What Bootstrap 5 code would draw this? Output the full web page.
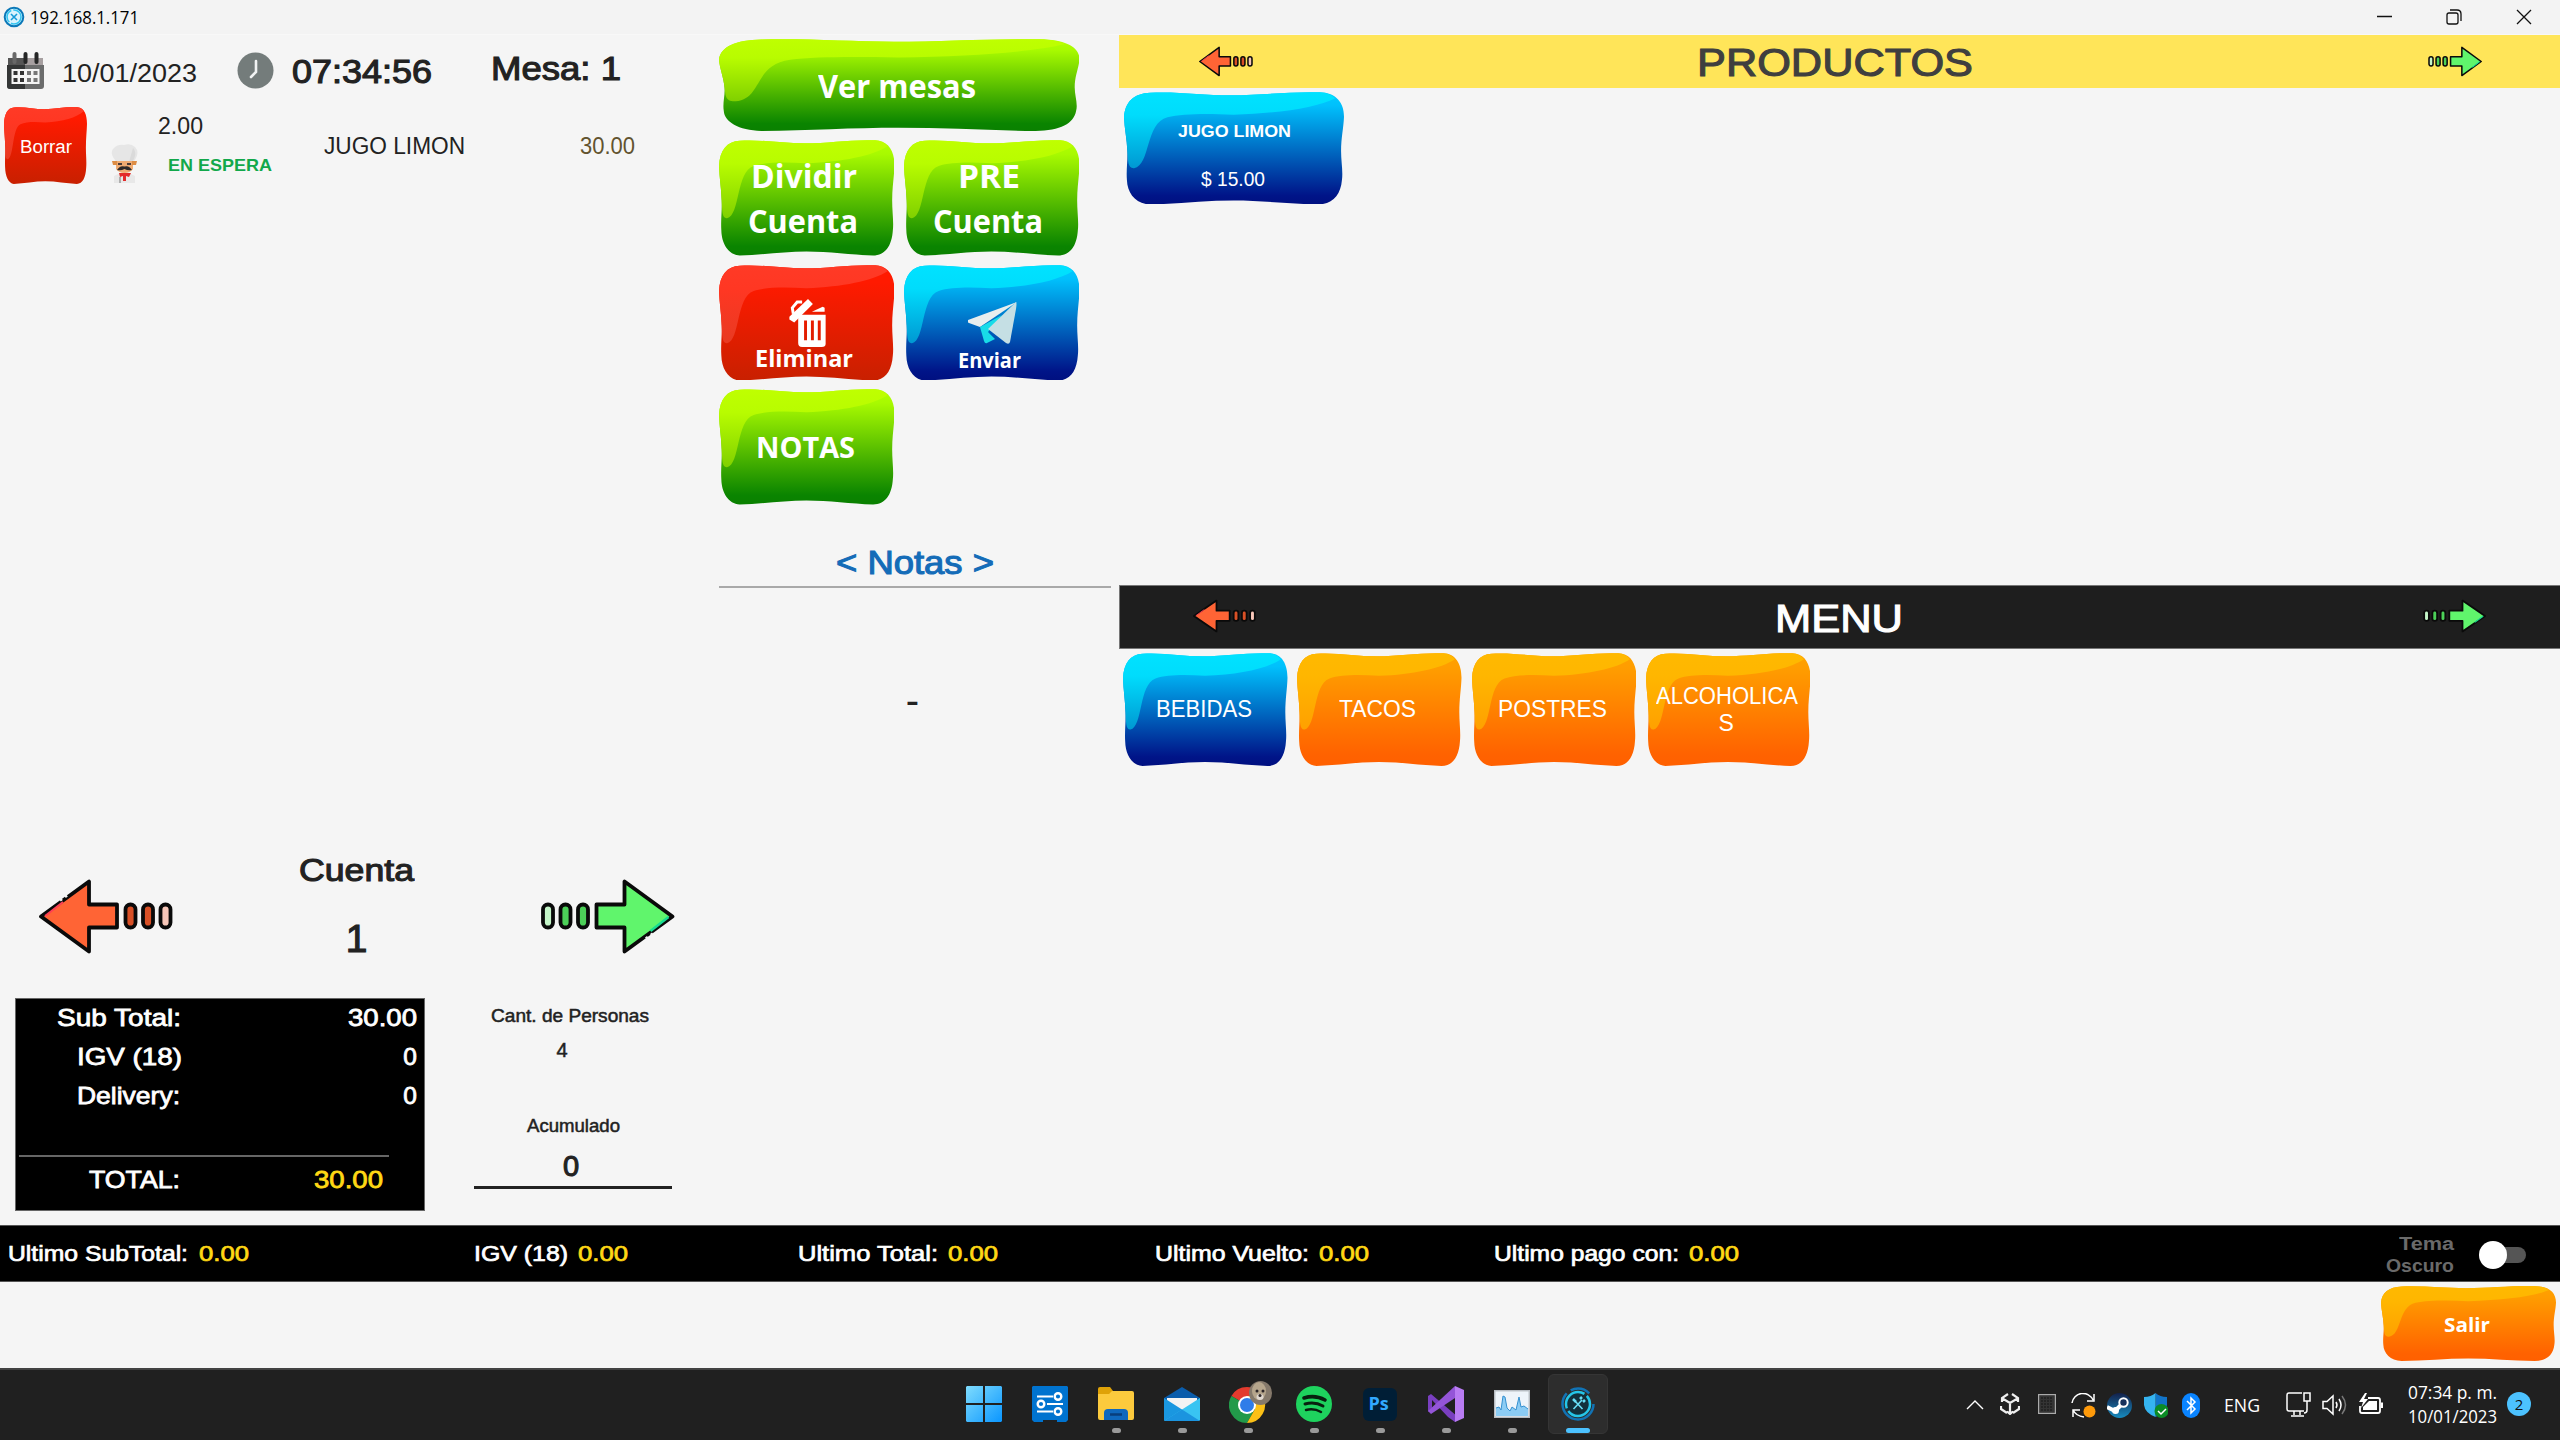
<!DOCTYPE html>
<html lang="es">
<head>
<meta charset="utf-8">
<title>192.168.1.171</title>
<meta name="viewport" content="width=device-width, initial-scale=1">
<link href="https://cdn.jsdelivr.net/npm/bootstrap@5.3.0/dist/css/bootstrap.min.css" rel="stylesheet">
<style>
html,body{width:2560px;height:1440px;overflow:hidden}
body{background:#f5f5f5;color:#222;font-family:"Liberation Sans",Arial,sans-serif;line-height:1}
svg{display:block;flex:none}
.segoe{font-family:"Open Sans","Noto Sans",sans-serif}
.thick{-webkit-text-stroke:1.1px currentColor}
[data-w]{display:inline-block;white-space:pre;flex:none}
.titlebar{height:35px;background:#f3f3f3;color:#000;font-size:18px;border-bottom:1px solid #f8f8f8}
.col-order{width:718px}.col-actions{width:401px;padding:4px 0 0 .5px}.col-catalog{width:1441px}
.f16{font-size:16.5px}.f18{font-size:18px}.f20{font-size:20px}.f22{font-size:21.5px}.f23{font-size:23px}.f25{font-size:24.5px}.f26{font-size:26.5px}.f33{font-size:33px}.f39{font-size:39px}
.order-head{height:71px;padding-left:7px}
.item-row{height:79px;padding:1px 0 0 4px}
.en-espera{color:#12a84b;font-weight:700}
/* glossy buttons */
.gloss{position:relative;border:0;padding:0;background:none;color:#fff;display:flex;flex-direction:column;align-items:center;justify-content:center;flex:none}
.gloss>.skin{position:absolute;inset:0;width:100%;height:100%;z-index:0}
.gloss>:not(.skin){position:relative;z-index:1}
.action-grid{display:grid;grid-template-columns:175.500px 175.500px;column-gap:9.500px;row-gap:9px;height:466.500px;align-content:start}
.act{height:115.500px;width:175.500px}
.wide{grid-column:1/3;width:360.500px;height:92px}
.notes-title{color:#146cb8;height:82px;line-height:52px;padding-top:31px;width:392px;border-bottom:2px solid #a9a9a9}
.nav-row{height:110px;padding-left:39px}
.totals{width:410px;height:213px;background:#000;color:#fff;border:1px solid #666;padding:0 7px 0 3px}
.totals .line{height:39px;padding-top:1px}
.totals .rule{height:2px;width:370px;background:#666}
.gold{color:#ffd814}
.people{width:198px;height:191px;margin-left:49px;border-bottom:3px solid #222}
.bar-prod{height:52.500px;background:#ffe559;color:#3f3f3f;padding:0 78px 0 80px}
.bar-menu{height:64px;background:#1e1e1e;color:#fff;border:1px solid #777;border-right:0;padding:0 74px 0 73px}
.prod-area{height:497.500px;padding:4px 0 0 5px}
.cat{width:164.500px;height:113px}
.status{height:57px;background:#000;color:#fff;border-top:1px solid #555;border-bottom:1px solid #555;padding:3px 0 0 8px}
.tema{color:#6a6a6a;font-weight:700;font-size:18px;line-height:22px}
.switch{width:47px;height:28px}
.foot{height:86px;padding:4px 4px 0 0}
.taskbar{height:72px;background:#202020;border-top:2px solid #424242;color:#fff;padding-left:951px}
.app{width:66px;height:70px;display:flex;align-items:center;justify-content:center;position:relative}
.app::after{content:"";position:absolute;bottom:7px;left:28.5px;width:9px;height:5px;border-radius:3px;background:#9a9a9a}
.app.idle::after{display:none}
.app.active::after{width:24px;left:21px;background:#4cc2ff;bottom:7px}
.app.active::before{content:"";position:absolute;inset:4px 3px 6px 3px;background:#2d2d2d;border:1px solid #353535;border-radius:6px}
.app svg{position:relative;top:-1px}
.tray{margin-left:355px}
.notif{width:24px;height:24px;border-radius:50%;background:#4cc2ff;color:#111;font-size:15px}
</style>
<script src="https://cdn.jsdelivr.net/npm/bootstrap@5.3.0/dist/js/bootstrap.bundle.min.js"></script>
</head>
<body class="d-flex flex-column m-0">
<svg width="0" height="0" class="position-absolute">
<defs>
<linearGradient id="green" x1="0" y1="0" x2="0" y2="1"><stop offset="0" stop-color="#b2ff00"/><stop offset=".12" stop-color="#a8fa00"/><stop offset=".92" stop-color="#0a8400"/><stop offset="1" stop-color="#0a8000"/></linearGradient>
<linearGradient id="greenS" x1="0" y1="0" x2="0" y2="1"><stop offset="0" stop-color="#bfff00"/><stop offset=".3" stop-color="#b8fc00"/><stop offset="1" stop-color="#80d000"/></linearGradient>
<linearGradient id="red" x1="0" y1="0" x2="0" y2="1"><stop offset="0" stop-color="#ff1a00"/><stop offset=".15" stop-color="#ff1a00"/><stop offset="1" stop-color="#c82000"/></linearGradient>
<linearGradient id="redS" x1="0" y1="0" x2="0" y2="1"><stop offset="0" stop-color="#ff3a26"/><stop offset=".3" stop-color="#ff3723"/><stop offset="1" stop-color="#e83a22"/></linearGradient>
<linearGradient id="blue" x1="0" y1="0" x2="0" y2="1"><stop offset="0" stop-color="#00ccff"/><stop offset=".12" stop-color="#00c0fc"/><stop offset=".92" stop-color="#001488"/><stop offset="1" stop-color="#001080"/></linearGradient>
<linearGradient id="blueS" x1="0" y1="0" x2="0" y2="1"><stop offset="0" stop-color="#00e2ff"/><stop offset=".3" stop-color="#00dcfc"/><stop offset="1" stop-color="#0098d2"/></linearGradient>
<linearGradient id="orange" x1="0" y1="0" x2="0" y2="1"><stop offset="0" stop-color="#ffa200"/><stop offset=".15" stop-color="#ff9c00"/><stop offset=".9" stop-color="#ff6200"/><stop offset="1" stop-color="#ff6000"/></linearGradient>
<linearGradient id="orangeS" x1="0" y1="0" x2="0" y2="1"><stop offset="0" stop-color="#ffb900"/><stop offset=".3" stop-color="#ffb600"/><stop offset="1" stop-color="#ffa000"/></linearGradient>
<path id="blob" d="M0 78C2 30 24 4 62 2C130-2 190 10 255 10C330 10 395-2 468 1C508 2 526 34 526 76C525 110 519 140 519 182C519 215 524 245 521 272C518 318 498 347 462 347C395 345 330 335 262 335C195 335 130 345 62 347C28 345 8 312 7 272C5 240 9 215 8 182C7 145 1 112 0 78Z"/>
<path id="shine" d="M0 78C2 30 24 4 62 2C130-2 190 10 255 10C330 10 395-2 468 1C484 2 496 8 505 19C460 48 370 66 262 70C200 66 140 66 104 78C50 96 64 226 24 235C8 236 10 210 8 182C7 145 1 112 0 78Z"/>
<g id="arrowL"><path d="M50 3.500V26.500H78V49.500H50V73.500L2 38.500Z" fill="#ff6435" stroke="#0a0a0a" stroke-width="3.800" stroke-linejoin="round"/><path d="M6 38L24 24" stroke="#ff3f55" stroke-width="2"/><rect x="86.500" y="26.500" width="10" height="23" rx="5" fill="#d95026" stroke="#0a0a0a" stroke-width="3.800"/><rect x="104" y="26.500" width="10" height="23" rx="5" fill="#d95026" stroke="#0a0a0a" stroke-width="3.800"/><rect x="121.500" y="26.500" width="10" height="23" rx="5" fill="#f7c6b8" stroke="#0a0a0a" stroke-width="3.800"/></g>
<g id="arrowR"><path d="M84 3.500V26.500H56V49.500H84V73.500L132 38.500Z" fill="#60f56c" stroke="#0a0a0a" stroke-width="3.800" stroke-linejoin="round"/><path d="M128 39L110 53" stroke="#18dc92" stroke-width="2.500"/><rect x="2.500" y="26.500" width="10" height="23" rx="5" fill="#c4f5c8" stroke="#0a0a0a" stroke-width="3.800"/><rect x="20" y="26.500" width="10" height="23" rx="5" fill="#4cd058" stroke="#0a0a0a" stroke-width="3.800"/><rect x="37.500" y="26.500" width="10" height="23" rx="5" fill="#4cd058" stroke="#0a0a0a" stroke-width="3.800"/></g>
</defs></svg>

<header class="titlebar d-flex align-items-center">
  <svg width="22" height="22" viewBox="0 0 22 22" style="margin-left:3px"><circle cx="11" cy="11" r="9.300" fill="#d9f3fd" stroke="#0a78b8" stroke-width="2"/><circle cx="11" cy="11" r="7" fill="none" stroke="#32c4f0" stroke-width="1.600" stroke-dasharray="14 2"/><path d="M8 8l6 6M14 8l-6 6" stroke="#149ad8" stroke-width="1.600"/></svg>
  <span class="segoe" data-w="109" style="margin-left:5px">192.168.1.171</span>
  <svg class="ms-auto" width="190" height="22" viewBox="0 0 190 22" fill="none" stroke="#111" stroke-width="1.300"><path d="M7 10.500H22M147 4l14 14M161 4l-14 14"/><rect x="77" y="7" width="11" height="11" rx="2"/><path d="M80 4h7q4 0 4 4v7"/></svg>
</header>

<main class="d-flex" style="height:1190px">
 <section class="col-order d-flex flex-column">
  <div class="order-head d-flex align-items-center">
   <svg width="37" height="37" viewBox="0 0 37 37"><path d="M1 6h35v11H1z" fill="#a69fa0"/><path d="M1 6h17v11H1z" fill="#555"/><path d="M0 13h37v21q0 3-3 3H3q-3 0-3-3z" fill="#6b6c6c"/><path d="M0 13h18v24H3q-3 0-3-3z" fill="#343636"/><path d="M4.500 17h28v15h-28z" fill="#f5f5f5"/><g fill="#333"><path d="M6.500 19h4v4h-4zM13 19h4v4h-4zM6.500 26h4v4h-4zM13 26h4v4h-4z"/></g><g fill="#777"><path d="M20 19h4v4h-4zM26.500 19h4v4h-4zM20 26h4v4h-4zM26.500 26h4v4h-4z"/></g><path d="M7.500 2v8" stroke="#686868" stroke-width="4" stroke-linecap="round"/><path d="M18.500 2v8M29.500 2v8" stroke="#252626" stroke-width="4" stroke-linecap="round"/></svg>
   <span class="f26" data-w="135" style="margin:5px 0 0 18px">10/01/2023</span>
   <svg style="margin-left:40px" width="37" height="37" viewBox="0 0 37 37"><circle cx="18.500" cy="18.500" r="18" fill="#747c7b"/><path d="M19 9v11l-5 5" fill="none" stroke="#f1f3f3" stroke-width="2.600" stroke-linecap="round"/></svg>
   <span class="f33 thick" data-w="140" style="margin:1px 0 0 18px">07:34:56</span>
   <span class="f33 thick" data-w="130" style="margin:0 0 4px 59px">Mesa: 1</span>
  </div>
  <div class="item-row d-flex">
   <button class="gloss" style="width:83px;height:77px"><svg class="skin" viewBox="0 0 526 347" preserveAspectRatio="none"><use href="#blob" fill="url(#red)"/><use href="#shine" fill="url(#redS)"/></svg><span class="f18" data-w="52" style="margin-top:2px">Borrar</span></button>
   <svg style="margin:37px 0 0 24px" width="27" height="39" viewBox="0 0 27 39"><path d="M4 16Q-2 8 3 4Q7 0 13 1Q20-1 24 3Q29 8 24 16L22 18H5z" fill="#e6e6e6"/><path d="M22 4q4 4 1 11l-2 3h-3z" fill="#dadada"/><path d="M5 17h17v8q-3 4-8.500 4T5 25z" fill="#f0ab72"/><path d="M1 17h5v4H2zM21 17h5l-1 4h-4z" fill="#dd8d45"/><path d="M7 19h4v2H7zM16 19h4v2h-4z" fill="#4a3b38"/><path d="M6 26q3-5 7.500-3.500Q18 21 21 26q-4 1-7.500-1Q10 27 6 26z" fill="#2d2929"/><path d="M3 39v-7l6-3h9l6 3v7z" fill="#e8e8e8"/><path d="M8 29h12l-2 4-3-1v5h-3V32l-3 1z" fill="#e32a2a"/><path d="M9 33v6" stroke="#777"/></svg>
   <div class="d-flex flex-column align-items-start" style="width:187px"><span class="f23" data-w="45" style="margin:8px 0 0 20px">2.00</span><span class="f16 en-espera" data-w="104" style="margin:19px 0 0 30px">EN ESPERA</span></div>
   <span class="f23" data-w="141" style="margin-top:28px;margin-left:-1px">JUGO LIMON</span>
   <span class="f23" data-w="55" style="margin:28px 0 0 115px;color:#62532f">30.00</span>
  </div>
  <div class="nav-row d-flex align-items-end" style="margin-top:665px">
   <svg width="134" height="77" viewBox="0 0 134 77" style="margin-bottom:5px"><use href="#arrowL"/><path d="M22 24l2-1.500M27 20.500l2-1.500" stroke="#f5f5f5" stroke-width="6" transform="translate(-2 -3)"/></svg>
   <div class="d-flex flex-column align-items-center" style="width:367px;height:110px"><span class="thick" data-w="115" style="font-size:32px;line-height:40px">Cuenta</span><span class="f39 thick" style="line-height:40px;margin-top:29px">1</span></div>
   <svg width="135" height="77" viewBox="0 0 134 77" style="margin-bottom:5px"><use href="#arrowR"/><path d="M106 57l-2 1.500M111 53.500l-2 1.500" stroke="#f5f5f5" stroke-width="5" transform="translate(2 3)"/></svg>
  </div>
  <div class="d-flex" style="margin:38px 0 0 15px">
   <div class="totals f25 thick" style="-webkit-text-stroke-width:.8px">
    <div class="line d-flex justify-content-between"><span data-w="124" style="margin:6px 0 0 38px">Sub Total:</span><span data-w="69" style="margin-top:6px">30.00</span></div>
    <div class="line d-flex justify-content-between"><span data-w="105" style="margin:6px 0 0 58px">IGV (18)</span><span style="margin-top:6px">0</span></div>
    <div class="line d-flex justify-content-between"><span data-w="103" style="margin:6px 0 0 58px">Delivery:</span><span style="margin-top:6px">0</span></div>
    <div class="rule" style="margin-top:39px"></div>
    <div class="d-flex justify-content-between" style="padding:11px 34px 0 70px"><span data-w="91">TOTAL:</span><span class="gold" data-w="69">30.00</span></div>
   </div>
   <div class="people d-flex flex-column align-items-center thick" style="-webkit-text-stroke-width:.5px">
    <span class="f18" data-w="158" style="margin:9px 6px 0 0">Cant. de Personas</span>
    <span class="f20" style="margin:15px 22px 0 0">4</span>
    <span class="f18" data-w="93" style="margin-top:57px">Acumulado</span>
    <span class="thick" style="font-size:29px;margin:17px 4px 0 0">0</span>
   </div>
  </div>
 </section>

 <section class="col-actions">
  <div class="action-grid segoe fw-bold">
   <button class="gloss wide fw-bold"><svg class="skin" viewBox="0 0 526 347" preserveAspectRatio="none"><use href="#blob" fill="url(#green)"/><use href="#shine" fill="url(#greenS)"/></svg><span class="f33" data-w="158" style="margin-right:4px">Ver mesas</span></button>
   <button class="gloss act fw-bold f33" style="line-height:45px"><svg class="skin" viewBox="0 0 526 347" preserveAspectRatio="none"><use href="#blob" fill="url(#green)"/><use href="#shine" fill="url(#greenS)"/></svg><span data-w="106" style="margin:0 5px 0 0">Dividir</span><span data-w="110" style="margin-right:6px">Cuenta</span></button>
   <button class="gloss act fw-bold f33" style="line-height:45px"><svg class="skin" viewBox="0 0 526 347" preserveAspectRatio="none"><use href="#blob" fill="url(#green)"/><use href="#shine" fill="url(#greenS)"/></svg><span data-w="62" style="margin:0 5px 0 0">PRE</span><span data-w="110" style="margin-right:6px">Cuenta</span></button>
   <button class="gloss act fw-bold justify-content-start"><svg class="skin" viewBox="0 0 526 347" preserveAspectRatio="none"><use href="#blob" fill="url(#red)"/><use href="#shine" fill="url(#redS)"/></svg>
    <svg style="margin:34px 0 0 2px" width="37" height="49" viewBox="0 0 37 50" fill="#fff"><path fill-rule="evenodd" d="M9 16H37V46Q37 49 33 49H13Q9 49 9 45ZM15 22V42H18V22ZM22 22V42H25V22ZM29 22V42H32V22Z"/><path d="M23 13L34 8L36 9V13Z"/><path d="M0 18L19 0L24 5L5 24L0 21Z"/><path d="M4 15L3 9L8 3L13 3" fill="none" stroke="#fff" stroke-width="3"/></svg>
    <span data-w="98" style="font-size:24px;margin:-2px 4px 0 0">Eliminar</span></button>
   <button class="gloss act fw-bold justify-content-start"><svg class="skin" viewBox="0 0 526 347" preserveAspectRatio="none"><use href="#blob" fill="url(#blue)"/><use href="#shine" fill="url(#blueS)"/></svg>
    <svg style="margin:37px 0 0 2px" width="49" height="43" viewBox="0 0 49 43"><path d="M0 18L49 0L12 25L1 21Q-1 20 0 18Z" fill="#e8eeee"/><path d="M12 25L34 13L20 30L27 37L19 41Q17 42 16 39Z" fill="#18dce8"/><path d="M48 0Q49 1 48 7L42 40Q41 43 38 41L20 27Z" fill="#c5dfe4"/></svg>
    <span data-w="63" style="font-size:21px;margin:5px 4px 0 0">Enviar</span></button>
   <button class="gloss act fw-bold"><svg class="skin" viewBox="0 0 526 347" preserveAspectRatio="none"><use href="#blob" fill="url(#green)"/><use href="#shine" fill="url(#greenS)"/></svg><span data-w="99" style="font-size:29px;margin:0 2px 0 0">NOTAS</span></button>
  </div>
  <div class="notes-title text-center f33 thick"><span data-w="158">&lt; Notas &gt;</span></div>
  <div class="text-center" style="width:388px;font-size:40px;margin-top:92px">-</div>
 </section>

 <section class="col-catalog">
  <div class="bar-prod d-flex justify-content-between align-items-center">
   <svg width="54" height="31" viewBox="0 0 134 77" preserveAspectRatio="none"><use href="#arrowL"/></svg>
   <span class="f39 thick" data-w="276" style="margin:2px 12px 0 0">PRODUCTOS</span>
   <svg width="54" height="31" viewBox="0 0 134 77" preserveAspectRatio="none"><use href="#arrowR"/></svg>
  </div>
  <div class="prod-area">
   <button class="gloss justify-content-start" style="width:220px;height:112.500px"><svg class="skin" viewBox="0 0 526 347" preserveAspectRatio="none"><use href="#blob" fill="url(#blue)"/><use href="#shine" fill="url(#blueS)"/></svg><span class="fw-bold" data-w="113" style="font-size:17px;margin-top:31px">JUGO LIMON</span><span class="f20" data-w="64" style="margin:29px 3px 0 0">$ 15.00</span></button>
  </div>
  <div class="bar-menu d-flex justify-content-between align-items-center">
   <svg style="margin-bottom:2px" width="63" height="34" viewBox="0 0 134 77" preserveAspectRatio="none"><use href="#arrowL"/></svg>
   <span class="f39 thick" data-w="128" style="margin:3px 2px 0 0">MENU</span>
   <svg style="margin-bottom:2px" width="63" height="34" viewBox="0 0 134 77" preserveAspectRatio="none"><use href="#arrowR"/></svg>
  </div>
  <div class="d-flex f23" style="gap:9.800px;padding:4px 0 0 4px;line-height:27px">
   <button class="gloss cat"><svg class="skin" viewBox="0 0 526 347" preserveAspectRatio="none"><use href="#blob" fill="url(#blue)"/><use href="#shine" fill="url(#blueS)"/></svg><span data-w="96" style="margin-right:2px">BEBIDAS</span></button>
   <button class="gloss cat"><svg class="skin" viewBox="0 0 526 347" preserveAspectRatio="none"><use href="#blob" fill="url(#orange)"/><use href="#shine" fill="url(#orangeS)"/></svg><span data-w="77" style="margin-right:4px">TACOS</span></button>
   <button class="gloss cat"><svg class="skin" viewBox="0 0 526 347" preserveAspectRatio="none"><use href="#blob" fill="url(#orange)"/><use href="#shine" fill="url(#orangeS)"/></svg><span data-w="109" style="margin-right:2px">POSTRES</span></button>
   <button class="gloss cat"><svg class="skin" viewBox="0 0 526 347" preserveAspectRatio="none"><use href="#blob" fill="url(#orange)"/><use href="#shine" fill="url(#orangeS)"/></svg><span data-w="142" style="margin-right:3px">ALCOHOLICA</span><span style="margin-right:4px">S</span></button>
  </div>
 </section>
</main>

<section class="status d-flex align-items-center f22 thick" style="-webkit-text-stroke-width:.7px">
 <div style="width:466px"><span data-w="180">Ultimo SubTotal:</span><span class="gold" data-w="50" style="margin-left:11px">0.00</span></div>
 <div style="width:324px"><span data-w="94">IGV (18)</span><span class="gold" data-w="50" style="margin-left:10px">0.00</span></div>
 <div style="width:357px"><span data-w="140">Ultimo Total:</span><span class="gold" data-w="50" style="margin-left:10px">0.00</span></div>
 <div style="width:339px"><span data-w="154">Ultimo Vuelto:</span><span class="gold" data-w="50" style="margin-left:10px">0.00</span></div>
 <div><span data-w="185">Ultimo pago con:</span><span class="gold" data-w="50" style="margin-left:10px">0.00</span></div>
 <div class="tema ms-auto text-end" style="-webkit-text-stroke:0;margin-right:25px"><span data-w="55">Tema</span><br><span data-w="68">Oscuro</span></div>
 <svg class="switch" viewBox="0 0 47 28" style="margin-right:34px"><rect x="14" y="6" width="33" height="16" rx="8" fill="#555"/><circle cx="14" cy="14" r="14" fill="#fff"/></svg>
</section>
<footer class="foot d-flex justify-content-end">
 <button class="gloss" style="width:175px;height:75px"><svg class="skin" viewBox="0 0 526 347" preserveAspectRatio="none"><use href="#blob" fill="url(#orange)"/><use href="#shine" fill="url(#orangeS)"/></svg><span class="segoe fw-bold f20" data-w="46" style="margin:2px 3px 0 0">Salir</span></button>
</footer>

<nav class="taskbar d-flex align-items-center">
 <div class="app idle"><svg width="36" height="36" viewBox="0 0 36 36"><defs><linearGradient id="win" x1="0" y1="0" x2="1" y2="1"><stop offset="0" stop-color="#7fdcfd"/><stop offset="1" stop-color="#0a96ff"/></linearGradient></defs><path fill="url(#win)" d="M1 0H17V17H0V1ZM19 0H35L36 1V17H19ZM0 19H17V36H1L0 35ZM19 19H36V35L35 36H19Z"/></svg></div>
 <div class="app idle"><svg width="36" height="36" viewBox="0 0 36 36"><path d="M0 1L1 0H35L36 1V34L34 36H25V34H11V36H2L0 34Z" fill="#0073cf"/><g fill="none" stroke="#fff" stroke-width="2"><path d="M5 10.500H21M15 18H31M5 25.500H21"/><g stroke-width="2.400"><circle cx="26" cy="10.500" r="3.300"/><circle cx="9" cy="18" r="3.300"/><circle cx="26" cy="25.500" r="3.300"/></g></g></svg></div>
 <div class="app"><svg width="36" height="34" viewBox="0 0 36 34"><path d="M0 2Q0 0 2 0H12L15 4V12H0Z" fill="#dfa208"/><path d="M0 7H11L14 4H34Q36 4 36 6V31Q36 33 34 33H2Q0 33 0 31Z" fill="#fcca3d"/><path d="M6 33V26Q6 22 10 22H26Q30 22 30 26V33Z" fill="#0f68bd"/><path d="M12 27.500H24" stroke="#093e7c" stroke-width="2.500"/></svg></div>
 <div class="app"><svg width="36" height="34" viewBox="0 0 36 34"><path d="M0 11L18 0L36 11V24H0Z" fill="#0a5cab"/><path d="M3 11H33V24H3Z" fill="#f3f3f3"/><path d="M0 11L18 22.500V34H1L0 33Z" fill="#1a97e0"/><path d="M36 11L0 34H35L36 33Z" fill="#39c4f2"/><path d="M18 22.500L36 34H0Z" fill="#1b94df"/></svg></div>
 <div class="app"><svg width="44" height="46" viewBox="0 0 44 46" style="left:3px;top:-5px"><path d="M18 28L2.400 19A18 18 0 0 1 33.600 19Z" fill="#e33b2e"/><path d="M18 28L2.400 19A18 18 0 0 0 18 46L26 32Z" fill="#229a4a"/><path d="M18 19H33.600A18 18 0 0 1 18 46L26 32Z" fill="#fbc016"/><circle cx="18" cy="28" r="9" fill="#fff"/><circle cx="18" cy="28" r="7" fill="#2f7de9"/><ellipse cx="31.500" cy="16" rx="11.500" ry="12" fill="#85796b"/><ellipse cx="30" cy="14" rx="7" ry="9" fill="#b5a58c"/><circle cx="28" cy="14" r="1.500" fill="#2d2628"/><circle cx="34" cy="14" r="1.500" fill="#2d2628"/><ellipse cx="31" cy="20" rx="3.500" ry="3" fill="#e0d8d0"/><circle cx="31" cy="18.500" r="1.500" fill="#2d2628"/></svg></div>
 <div class="app"><svg width="36" height="36" viewBox="0 0 36 36"><circle cx="18" cy="18" r="18" fill="#1ed35e"/><g fill="none" stroke="#08200f" stroke-linecap="round"><path d="M8 12Q19 8.500 29 14" stroke-width="3.600"/><path d="M9 18Q19 15.500 27 20" stroke-width="3"/><path d="M10 24Q18 22 25 26" stroke-width="2.500"/></g></svg></div>
 <div class="app"><svg width="34" height="33" viewBox="0 0 34 33"><rect width="34" height="33" rx="6" fill="#001e36"/><text x="5.500" y="22" font-family="Open Sans" font-weight="700" font-size="18" fill="#31a8ff">Ps</text></svg></div>
 <div class="app"><svg width="36" height="36" viewBox="0 0 36 36"><path d="M0 10L3 8L30 31L27 36L20 31L4 14V23L1 26L0 25Z" fill="#7a3fc0"/><path d="M0 25L27 0V12L3 28Z" fill="#9455d8"/><path d="M27 0L36 4V32L27 36Z" fill="#b97cf3"/></svg></div>
 <div class="app"><svg width="36" height="28" viewBox="0 0 36 28"><rect x=".7" y=".7" width="34.600" height="26.600" fill="#eef4fa" stroke="#b7bcc2" stroke-width="1.500"/><path d="M2 26V18L5 17L7 20L9 6L11 7L13 18L16 21L18 17L22 20L25 7L27 17L30 16L34 19V26Z" fill="#8cccf4"/><path d="M2 18L5 17L7 20L9 6L11 7L13 18L16 21L18 17L22 20L25 7L27 17L30 16L34 19" fill="none" stroke="#3490d0"/></svg></div>
 <div class="app active"><svg width="34" height="34" viewBox="0 0 34 34" fill="none"><circle cx="17" cy="17" r="15.500" stroke="#1173b5" stroke-width="2.500" stroke-dasharray="60 5 20 12"/><circle cx="17" cy="17" r="12" fill="#12303c" stroke="#25c5e8" stroke-width="2.500" stroke-dasharray="30 3"/><path d="M12.500 22L21 13M21.500 22L13 13" stroke="#69ddf5" stroke-width="1.600"/><path d="M19 12l2-2M22 15l2-2M12 12l3 3" stroke="#69ddf5" stroke-width="2.500"/></svg></div>
 <div class="tray d-flex align-items-center segoe">
  <svg width="18" height="10" viewBox="0 0 18 10"><path d="M1 9L9 1L17 9" fill="none" stroke="#fff" stroke-width="1.400"/></svg>
  <svg style="margin:-3px 0 0 16px" width="20" height="22" viewBox="0 0 20 22" fill="none" stroke="#eee" stroke-width="2.200"><path d="M8 1L2 5V9M12 1L18 5V9M1 13V16L7 20M19 13V16L13 20M2.500 5.500L10 10L17.500 5.500M10 10V20M7 18.500L10 21L13 18.500"/></svg>
  <svg style="margin:-2px 0 0 18px" width="18" height="20" viewBox="0 0 18 20"><rect x=".6" y=".6" width="16.800" height="18.800" fill="#343434" stroke="#aaa" stroke-width="1.200"/><path d="M3 4H15M3 7H15M3 10H15M3 13H15M3 16H15" stroke="#151515" stroke-dasharray="2 1"/></svg>
  <svg style="margin-left:15px" width="25" height="25" viewBox="0 0 25 25" fill="none" stroke="#fff" stroke-width="1.500"><path d="M1 10A11 11 0 0 1 22 7M23 1V8H16M2 24V17H9M2 17Q5 23 13 24"/><circle cx="18.500" cy="18.500" r="6" fill="#ff9a0a" stroke="none"/></svg>
  <svg style="margin-left:11px" width="25" height="25" viewBox="0 0 25 25"><defs><linearGradient id="stm" x1="0" y1="0" x2="0" y2="1"><stop offset="0" stop-color="#13204a"/><stop offset="1" stop-color="#178cc0"/></linearGradient></defs><circle cx="12.500" cy="12.500" r="12.500" fill="url(#stm)"/><path d="M0 14L8 18L14 12" fill="none" stroke="#fff" stroke-width="4"/><circle cx="16.500" cy="9.500" r="4.200" fill="#16315c" stroke="#fff" stroke-width="2"/><circle cx="8.500" cy="17.500" r="3.500" fill="#fff"/></svg>
  <svg style="margin-left:12px" width="24" height="25" viewBox="0 0 24 25"><path d="M11.500 0Q16 4 23 4V12Q22 20 11.500 24Z" fill="#1274c8"/><path d="M11.500 0Q7 4 0 4V12Q1 20 11.500 24Z" fill="#35b4f0"/><circle cx="17.500" cy="18" r="7" fill="#0b8c25"/><path d="M14 18l3 3 5-5" fill="none" stroke="#fff" stroke-width="1.500"/></svg>
  <svg style="margin-left:14px" width="18" height="25" viewBox="0 0 18 25"><rect width="18" height="25" rx="9" fill="#0a84ff"/><path d="M5 8l8 8-4 4V5l4 4-8 8" fill="none" stroke="#fff" stroke-width="1.500"/></svg>
  <span class="f18" data-w="36" style="margin-left:24px">ENG</span>
  <svg style="margin:-2px 0 0 26px" width="25" height="25" viewBox="0 0 25 25" fill="none" stroke="#fff" stroke-width="1.500"><path d="M16 1H3Q1 1 1 3V17Q1 19 3 19H18M8 19V23M14 19V23M5 24H18M18 1H24V9H18ZM21 9V18Q21 21 18 21"/></svg>
  <svg style="margin-left:11px" width="25" height="22" viewBox="0 0 25 22" fill="none" stroke="#fff" stroke-width="1.500"><path d="M1 7.500H5L11 2V20L5 14.500H1ZM14 8Q16 11 14 14M17 5Q21 11 17 17"/><path d="M20 2Q27 11 20 20" stroke="#777"/></svg>
  <svg style="margin:-2px 0 0 12px" width="25" height="22" viewBox="0 0 25 22"><path d="M9 5H19Q21 5 21 7V18Q21 20 19 20H3Q1 20 1 18V13" fill="none" stroke="#fff" stroke-width="1.800"/><path d="M10 8H18V17H4V14Z" fill="#fff"/><path d="M22 9.500H24V15H22Z" fill="#fff"/><path d="M6 0L0 9H4L2 15L9 6H5L8 0Z" fill="#fff"/></svg>
  <div class="text-end" style="font-size:18px;line-height:24px;margin:-2px 0 0 24px"><span data-w="89">07:34 p. m.</span><br><span data-w="89">10/01/2023</span></div>
  <div class="notif d-flex align-items-center justify-content-center" style="margin:-2px 0 0 10px">2</div>
 </div>
</nav>
<script>
// Scale each label horizontally to its nominal width; the right margin takes up the difference.
Array.from(document.querySelectorAll('[data-w]')).forEach(function (el) {
  var natural = el.getBoundingClientRect().width, goal = +el.dataset.w;
  var right = parseFloat(getComputedStyle(el).marginRight) || 0;
  el.style.transformOrigin = '0 50%';
  el.style.transform = 'scaleX(' + (goal / natural).toFixed(4) + ')';
  el.style.marginRight = (right + goal - natural).toFixed(2) + 'px';
});
</script>
</body>
</html>
